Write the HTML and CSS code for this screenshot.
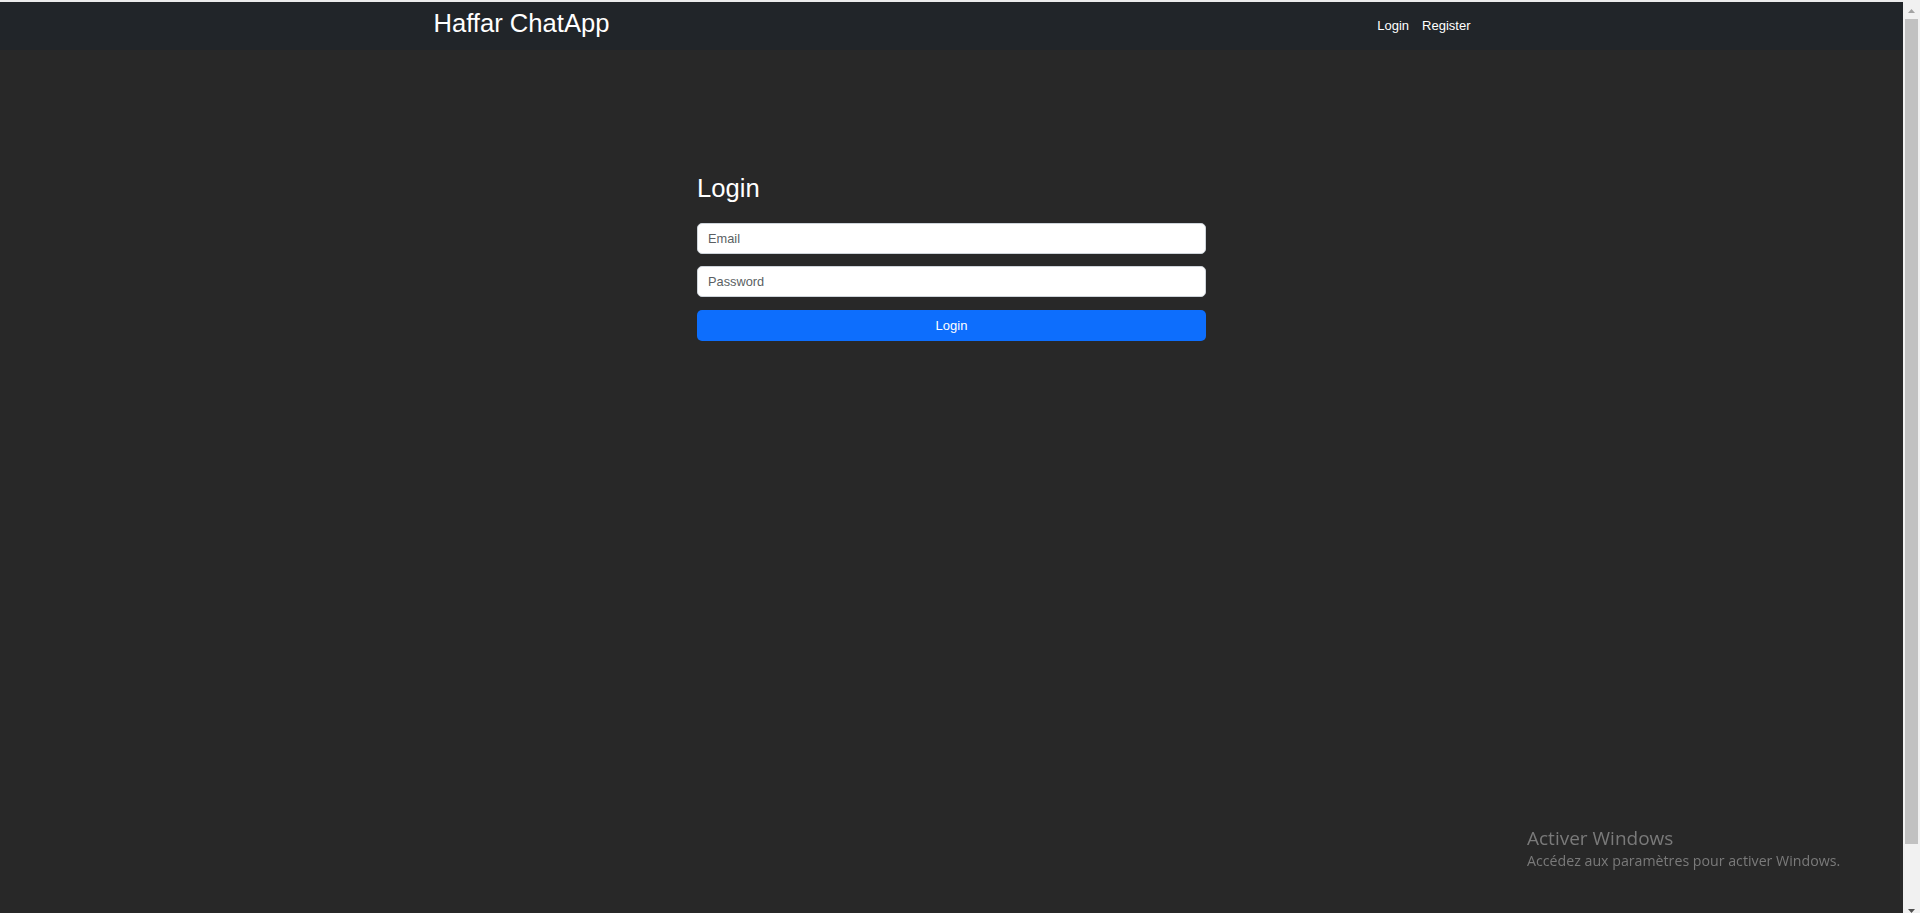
FILE: index.html
```html
<!DOCTYPE html>
<html lang="fr">
<head>
<meta charset="utf-8">
<title>Haffar ChatApp</title>
<link rel="stylesheet" href="styles.css">
</head>
<body>
<div class="page">
  <nav class="navbar">
    <div class="nav-inner">
      <a class="brand" href="#">Haffar ChatApp</a>
      <div class="nav-links">
        <a class="nav-link" href="#">Login</a>
        <a class="nav-link" href="#">Register</a>
      </div>
    </div>
  </nav>
  <main class="main">
    <form class="login-form">
      <h1 class="form-title">Login</h1>
      <input class="field" type="email" placeholder="Email">
      <input class="field" type="password" placeholder="Password">
      <button class="btn-login" type="button">Login</button>
    </form>
  </main>
</div>
<div class="scrollbar" aria-hidden="true">
  <div class="sb-button sb-up">
    <svg width="7" height="4" viewBox="0 0 7 4"><polygon points="0,4 7,4 3.5,0" fill="#a3a3a3"/></svg>
  </div>
  <div class="sb-track">
    <div class="sb-thumb"></div>
  </div>
  <div class="sb-button sb-down">
    <svg width="7" height="4" viewBox="0 0 7 4"><polygon points="0,0 7,0 3.5,4" fill="#505050"/></svg>
  </div>
</div>
<div class="watermark">
  <div class="wm-title">Activer Windows</div>
  <div class="wm-sub">Accédez aux paramètres pour activer Windows.</div>
</div>
</body>
</html>
```

FILE: styles.css
```css
html, body {
  margin: 0;
  padding: 0;
  background: #282828;
  overflow: hidden;
}

body {
  font-family: "Liberation Sans", Arial, sans-serif;
  color: #fff;
}

.page {
  width: calc(100% - 17px);
  border-top: 2px solid #ececec;
  min-height: 100vh;
  box-sizing: border-box;
}

.navbar {
  background: #212529;
  height: 48px;
}

.nav-inner {
  max-width: 1036px;
  margin: 0 auto;
  height: 100%;
  display: flex;
  align-items: flex-start;
  justify-content: space-between;
}

.brand {
  font-size: 25.6px;
  line-height: 38px;
  padding-top: 2px;
  color: #fff;
  text-decoration: none;
}

.nav-links {
  display: flex;
  gap: 13px;
  align-self: center;
  margin-top: -1px;
  margin-right: -1px;
}

.nav-link {
  font-size: 13px;
  line-height: 19px;
  color: #fff;
  text-decoration: none;
}

.main {
  padding-top: 123px;
}

.login-form {
  width: 509px;
  margin: 0 auto;
  display: flex;
  flex-direction: column;
  gap: 12px;
}

.form-title {
  font-size: 25.6px;
  font-weight: 400;
  line-height: 31px;
  margin: 0 0 7px;
  color: #fff;
}

.field {
  height: 31px;
  box-sizing: border-box;
  border: 1px solid #ced4da;
  border-radius: 5px;
  background: #fff;
  padding: 0 10px;
  font-family: "Liberation Sans", Arial, sans-serif;
  font-size: 12.8px;
  color: #212529;
  outline: none;
}

.field::placeholder {
  color: #5b5f63;
}

.btn-login {
  margin-top: 1px;
  height: 31px;
  border: 0;
  border-radius: 5px;
  background: #0d6efd;
  color: #fff;
  font-family: "Liberation Sans", Arial, sans-serif;
  font-size: 13px;
  font-weight: 400;
  cursor: pointer;
}

/* browser scrollbar, drawn over the right edge */
.scrollbar {
  position: fixed;
  top: 0;
  right: 0;
  width: 17px;
  height: 100vh;
  background: #f1f1f1;
  display: flex;
  flex-direction: column;
}

.sb-button {
  display: flex;
  justify-content: center;
}

.sb-up {
  height: 19px;
  padding-top: 9px;
  box-sizing: border-box;
}

.sb-track {
  flex: 1;
  padding: 0 2px;
}

.sb-thumb {
  height: 825px;
  background: #c1c1c1;
}

.sb-down {
  height: 4px;
}

.sb-down svg {
  display: block;
}

.watermark {
  position: fixed;
  left: 1527px;
  top: 826px;
  font-family: "Open Sans", "Noto Sans", sans-serif;
  color: #7a7a7a;
  pointer-events: none;
}

.wm-title {
  font-size: 19px;
  line-height: 25px;
}

.wm-sub {
  font-size: 14.2px;
  line-height: 20px;
}
```
